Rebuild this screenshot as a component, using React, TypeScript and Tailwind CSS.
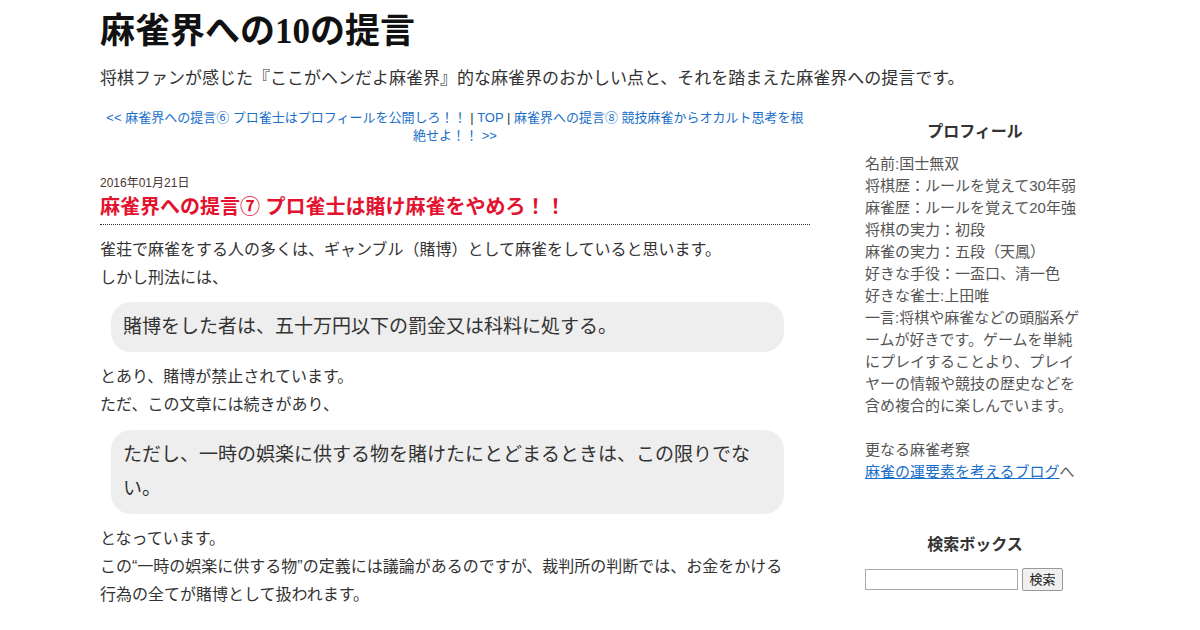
import React from "react";

const sans = "font-['Liberation_Sans','Noto_Sans_CJK_JP',sans-serif]";

export default function App() {
  return (
    <div className={`w-[1200px] h-[630px] overflow-hidden bg-white ${sans}`}>
      <div className="pl-[100px] pt-[8px]">
        <h1 className="font-['Liberation_Serif','Noto_Sans_CJK_JP',serif] font-bold text-[35px] leading-[48px] text-[#111]">
          麻雀界への10の提言
        </h1>
        <p className="mt-[11px] text-[17px] leading-[24px] text-[#333]">
          将棋ファンが感じた『ここがヘンだよ麻雀界』的な麻雀界のおかしい点と、それを踏まえた麻雀界への提言です。
        </p>
      </div>
      <div className="flex pl-[100px] gap-[55px]">
        <main className="w-[710px] shrink-0">
          <div className="mt-[18px] text-center text-[13px] leading-[18px] text-[#333]">
            <a className="text-[#1a6fc9]">&lt;&lt; 麻雀界への提言⑥ プロ雀士はプロフィールを公開しろ！！</a>
            <span> | </span>
            <a className="text-[#1a6fc9]">TOP</a>
            <span> | </span>
            <a className="text-[#1a6fc9]">麻雀界への提言⑧ 競技麻雀からオカルト思考を根絶せよ！！ &gt;&gt;</a>
          </div>
          <div className="mt-[30px] text-[12px] leading-[16px] text-[#4a3530]">2016年01月21日</div>
          <h2 className="mt-[2px] pb-[3px] border-b border-dotted border-[#333] text-[20px] leading-[28px] font-bold text-[#e3122e]">
            麻雀界への提言⑦ プロ雀士は賭け麻雀をやめろ！！
          </h2>
          <div className="w-[695px] mt-[11px] text-[16px] leading-[28px] text-[#333]">
            <p>雀荘で麻雀をする人の多くは、ギャンブル（賭博）として麻雀をしていると思います。</p>
            <p>しかし刑法には、</p>
            <blockquote className="mt-[10px] mx-[11px] rounded-[20px] bg-[#eeeeee] pl-[12px] pr-[30px] py-[8px] text-[19px] leading-[34px]">
              賭博をした者は、五十万円以下の罰金又は科料に処する。
            </blockquote>
            <p className="mt-[11px]">とあり、賭博が禁止されています。</p>
            <p>ただ、この文章には続きがあり、</p>
            <blockquote className="mt-[11px] mx-[11px] rounded-[20px] bg-[#eeeeee] pl-[12px] pr-[30px] py-[8px] text-[19px] leading-[34px]">
              ただし、一時の娯楽に供する物を賭けたにとどまるときは、この限りでない。
            </blockquote>
            <p className="mt-[11px]">となっています。</p>
            <p>この“一時の娯楽に供する物”の定義には議論があるのですが、裁判所の判断では、お金をかける行為の全てが賭博として扱われます。</p>
          </div>
        </main>
        <aside className="w-[220px] shrink-0 text-[15px] leading-[22px] text-[#555]">
          <h3 className="mt-[29px] text-center text-[16px] leading-[24px] font-bold text-[#333]">プロフィール</h3>
          <div className="mt-[9px]">
            <p>名前:国士無双</p>
            <p>将棋歴：ルールを覚えて30年弱</p>
            <p>麻雀歴：ルールを覚えて20年強</p>
            <p>将棋の実力：初段</p>
            <p>麻雀の実力：五段（天鳳）</p>
            <p>好きな手役：一盃口、清一色</p>
            <p>好きな雀士:上田唯</p>
            <p>一言:将棋や麻雀などの頭脳系ゲームが好きです。ゲームを単純にプレイすることより、プレイヤーの情報や競技の歴史などを含め複合的に楽しんでいます。</p>
            <p className="mt-[22px]">更なる麻雀考察</p>
            <p>
              <a className="text-[#1a6fc9] underline">麻雀の運要素を考えるブログ</a>へ
            </p>
          </div>
          <h3 className="mt-[50px] text-center text-[16px] leading-[24px] font-bold text-[#333]">検索ボックス</h3>
          <div className="mt-[11px] flex items-center gap-[4px]">
            <input className="w-[153px] h-[21px] border border-[#aaa] bg-white" />
            <button className="w-[41px] h-[23px] border border-[#999] rounded-[2px] bg-[#f0f0f0] text-[13px] leading-[20px] text-[#222]">
              検索
            </button>
          </div>
        </aside>
      </div>
    </div>
  );
}
